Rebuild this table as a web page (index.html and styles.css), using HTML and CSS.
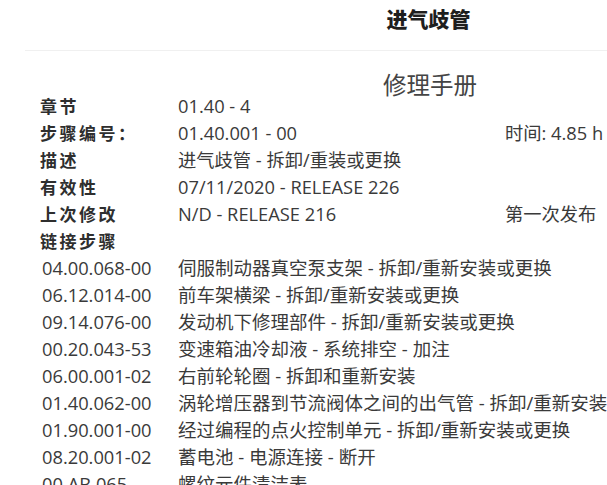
FILE: index.html
```html
<!DOCTYPE html>
<html lang="zh">
<head>
<meta charset="utf-8">
<link rel="stylesheet" href="styles.css">
</head>
<body>
<header class="top">
  <h1 class="title">进气歧管</h1>
</header>
<h2 class="subtitle">修理手册</h2>
<div class="info">
  <div class="lbl">章节</div><div class="val">01.40 - 4</div><div class="extra"></div>
  <div class="lbl">步骤编号：</div><div class="val">01.40.001 - 00</div><div class="extra">时间: 4.85 h</div>
  <div class="lbl">描述</div><div class="val">进气歧管 - 拆卸/重装或更换</div><div class="extra"></div>
  <div class="lbl">有效性</div><div class="val">07/11/2020 - RELEASE 226</div><div class="extra"></div>
  <div class="lbl">上次修改</div><div class="val">N/D - RELEASE 216</div><div class="extra">第一次发布</div>
  <div class="lbl">链接步骤</div><div class="val"></div><div class="extra"></div>
</div>
<div class="links">
  <div class="code">04.00.068-00</div><div class="desc">伺服制动器真空泵支架 - 拆卸/重新安装或更换</div>
  <div class="code">06.12.014-00</div><div class="desc">前车架横梁 - 拆卸/重新安装或更换</div>
  <div class="code">09.14.076-00</div><div class="desc">发动机下修理部件 - 拆卸/重新安装或更换</div>
  <div class="code">00.20.043-53</div><div class="desc">变速箱油冷却液 - 系统排空 - 加注</div>
  <div class="code">06.00.001-02</div><div class="desc">右前轮轮圈 - 拆卸和重新安装</div>
  <div class="code">01.40.062-00</div><div class="desc">涡轮增压器到节流阀体之间的出气管 - 拆卸/重新安装或更换</div>
  <div class="code">01.90.001-00</div><div class="desc">经过编程的点火控制单元 - 拆卸/重新安装或更换</div>
  <div class="code">08.20.001-02</div><div class="desc">蓄电池 - 电源连接 - 断开</div>
  <div class="code">00.AB.065</div><div class="desc">螺纹元件清洁表</div>
</div>
</body>
</html>
```
FILE: styles.css
```css
html, body {
  margin: 0;
  padding: 0;
  background: #ffffff;
  overflow: hidden;
}
body {
  width: 607px;
  height: 485px;
  font-family: "Open Sans", "Noto Sans CJK SC", sans-serif;
  color: #3a3a3a;
  font-size: 18px;
}
.top {
  margin-left: 25px;
  height: 50px;
  border-bottom: 1px solid #f0f0f0;
  display: flex;
  justify-content: center;
  padding-left: 225px;
}
.title {
  margin: 4px 0 0 0;
  font-size: 21px;
  font-weight: 900;
  color: #1e1e1e;
  line-height: 28px;
  font-family: "Noto Sans CJK SC", sans-serif;
}
.subtitle {
  margin: 17px 0 0 0;
  padding-left: 253px;
  text-align: center;
  font-size: 23.5px;
  font-weight: normal;
  color: #444;
  line-height: 32px;
  font-family: "Noto Sans CJK SC", sans-serif;
}
.info, .links {
  display: grid;
  grid-template-columns: 138px 327px auto;
  padding-left: 40px;
  line-height: 27px;
  white-space: nowrap;
  overflow: hidden;
}
.links {
  grid-template-columns: 136px auto;
  padding-left: 42px;
}
.info {
  margin-top: -8px;
}
.lbl {
  font-weight: bold;
  letter-spacing: 2.5px;
  color: #2e2e2e;
  font-family: "Noto Sans CJK SC", sans-serif;
  font-size: 17px;
}
.val, .extra, .desc, .code {
  font-size: 18.3px;
}
.desc {
  font-size: 18.5px;
}
```
